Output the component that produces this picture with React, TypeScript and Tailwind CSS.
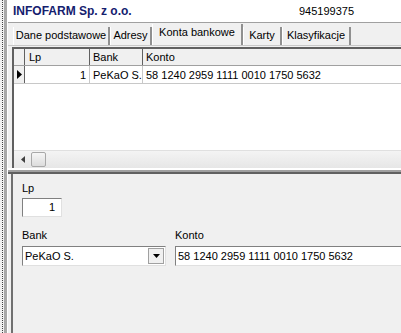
const tabs = [
  { t: "Dane podstawowe", w: "w-[97px]" },
  { t: "Adresy", w: "w-[42px]" },
  { t: "Konta bankowe", w: "w-[91px]" },
  { t: "Karty", w: "w-[39px]" },
  { t: "Klasyfikacje", w: "w-[69px]" },
];

const App = () => {
  return (
    <div className="w-[401px] h-[333px] overflow-hidden bg-[#f0f0f0] flex text-[11px] text-black font-['Liberation_Sans',Arial,sans-serif]">
      {/* left frame strip */}
      <div className="w-[4px] shrink-0 flex">
        <div className="ml-[2px] h-full border-l border-dotted border-[#404040]" />
      </div>
      <div className="w-[3px] shrink-0 bg-[#a8a8a8]" />
      <div className="w-[1px] shrink-0 bg-white" />

      <div className="flex-1 flex flex-col min-w-0">
        {/* header */}
        <div className="h-[23px] shrink-0 bg-white border-b border-[#a0a0a0] flex items-center pl-[5px]">
          <span className="font-bold text-[12px] text-[#14206e] leading-none">INFOFARM Sp. z o.o.</span>
          <span className="ml-auto mr-[47px] text-[11px] leading-none">945199375</span>
        </div>

        {/* tabs */}
        <div className="h-[23px] shrink-0 flex items-end pl-[5px] border-b border-[#c8c8c8]">
          {tabs.map(({ t, w }) => {
            const active = t === "Konta bankowe";
            return (
              <div
                key={t}
                className={
                  active
                    ? `${w} h-[21px] pt-[3px] text-center border-l border-white border-r-2 border-r-[#909090] bg-[#f0f0f0] leading-none whitespace-nowrap`
                    : `${w} h-[18px] pt-[3px] text-center border-l border-white border-r-2 border-r-[#909090] leading-none whitespace-nowrap`
                }
              >
                {t}
              </div>
            );
          })}
        </div>

        {/* grid */}
        <div className="ml-[4px] mt-[1px] h-[121px] shrink-0 flex flex-col bg-white border-l-2 border-t-2 border-[#606060]">
          <div className="h-[17px] flex bg-[#f0f0f0] border-b border-[#a0a0a0]">
            <div className="w-[11px] border-r border-[#606060]" />
            <div className="w-[65px] pl-[4px] pt-[3px] border-r border-[#606060] leading-none">Lp</div>
            <div className="w-[53px] pl-[3px] pt-[3px] border-r border-[#606060] leading-none">Bank</div>
            <div className="flex-1 pl-[3px] pt-[3px] leading-none">Konto</div>
          </div>
          <div className="h-[18px] flex border-b border-[#c8c8c8]">
            <div className="w-[11px] bg-[#f0f0f0] border-r border-[#606060] flex items-center justify-center">
              <svg width="5" height="9" viewBox="0 0 5 9">
                <path d="M0 0 L5 4.5 L0 9 Z" fill="#000" />
              </svg>
            </div>
            <div className="w-[65px] pr-[3px] pt-[4px] text-right border-r border-[#c8c8c8] leading-none">1</div>
            <div className="w-[53px] pl-[3px] pt-[4px] border-r border-[#c8c8c8] leading-none whitespace-nowrap overflow-hidden">PeKaO S.</div>
            <div className="flex-1 pl-[3px] pt-[4px] leading-none whitespace-nowrap">58 1240 2959 1111 0010 1750 5632</div>
          </div>
          <div className="flex-1" />
          {/* horizontal scrollbar */}
          <div className="h-[18px] flex items-center bg-gradient-to-b from-[#f4f4f4] to-[#e6e6e6] border-t border-[#e0e0e0]">
            <div className="w-[17px] flex items-center justify-center">
              <svg width="4" height="7" viewBox="0 0 4 7">
                <path d="M4 0 L0 3.5 L4 7 Z" fill="#404040" />
              </svg>
            </div>
            <div className="w-[15px] h-[15px] rounded-[2px] border border-[#a8a8a8] bg-gradient-to-b from-[#f6f6f6] to-[#dcdcdc]" />
          </div>
        </div>

        {/* splitter */}
        <div className="h-[2px] shrink-0 bg-white" />
        <div className="h-[2px] shrink-0 bg-[#a0a0a0]" />
        <div className="h-[2px] shrink-0 bg-[#606060]" />

        {/* detail panel */}
        <div className="flex-1 ml-[3px] border-l-2 border-[#707070] pl-[9px] pt-[9px]">
          <div className="leading-none">Lp</div>
          <div className="mt-[4px] w-[40px] h-[19px] bg-white border border-[#808080] border-b-[#e0e0e0] border-r-[#e0e0e0] text-right pr-[6px] pt-[3px] leading-none">
            1
          </div>
          <div className="mt-[13px] flex gap-[9px]">
            <div className="flex flex-col">
              <div className="leading-none">Bank</div>
              <div className="mt-[5px] w-[144px] h-[20px] bg-white border border-[#808080] border-b-[#e0e0e0] border-r-[#e0e0e0] flex">
                <div className="flex-1 pl-[2px] pt-[4px] leading-none">PeKaO S.</div>
                <div className="w-[16px] m-[1px] border border-[#a0a0a0] bg-[#f0f0f0] flex items-center justify-center">
                  <svg width="7" height="4" viewBox="0 0 7 4">
                    <path d="M0 0 L7 0 L3.5 4 Z" fill="#000" />
                  </svg>
                </div>
              </div>
            </div>
            <div className="flex flex-col flex-1">
              <div className="leading-none">Konto</div>
              <div className="mt-[5px] h-[20px] bg-white border border-[#808080] border-b-[#e0e0e0] border-r-0 pl-[2px] pt-[4px] leading-none whitespace-nowrap">
                58 1240 2959 1111 0010 1750 5632
              </div>
            </div>
          </div>
        </div>
      </div>
    </div>
  );
};

export default App;
